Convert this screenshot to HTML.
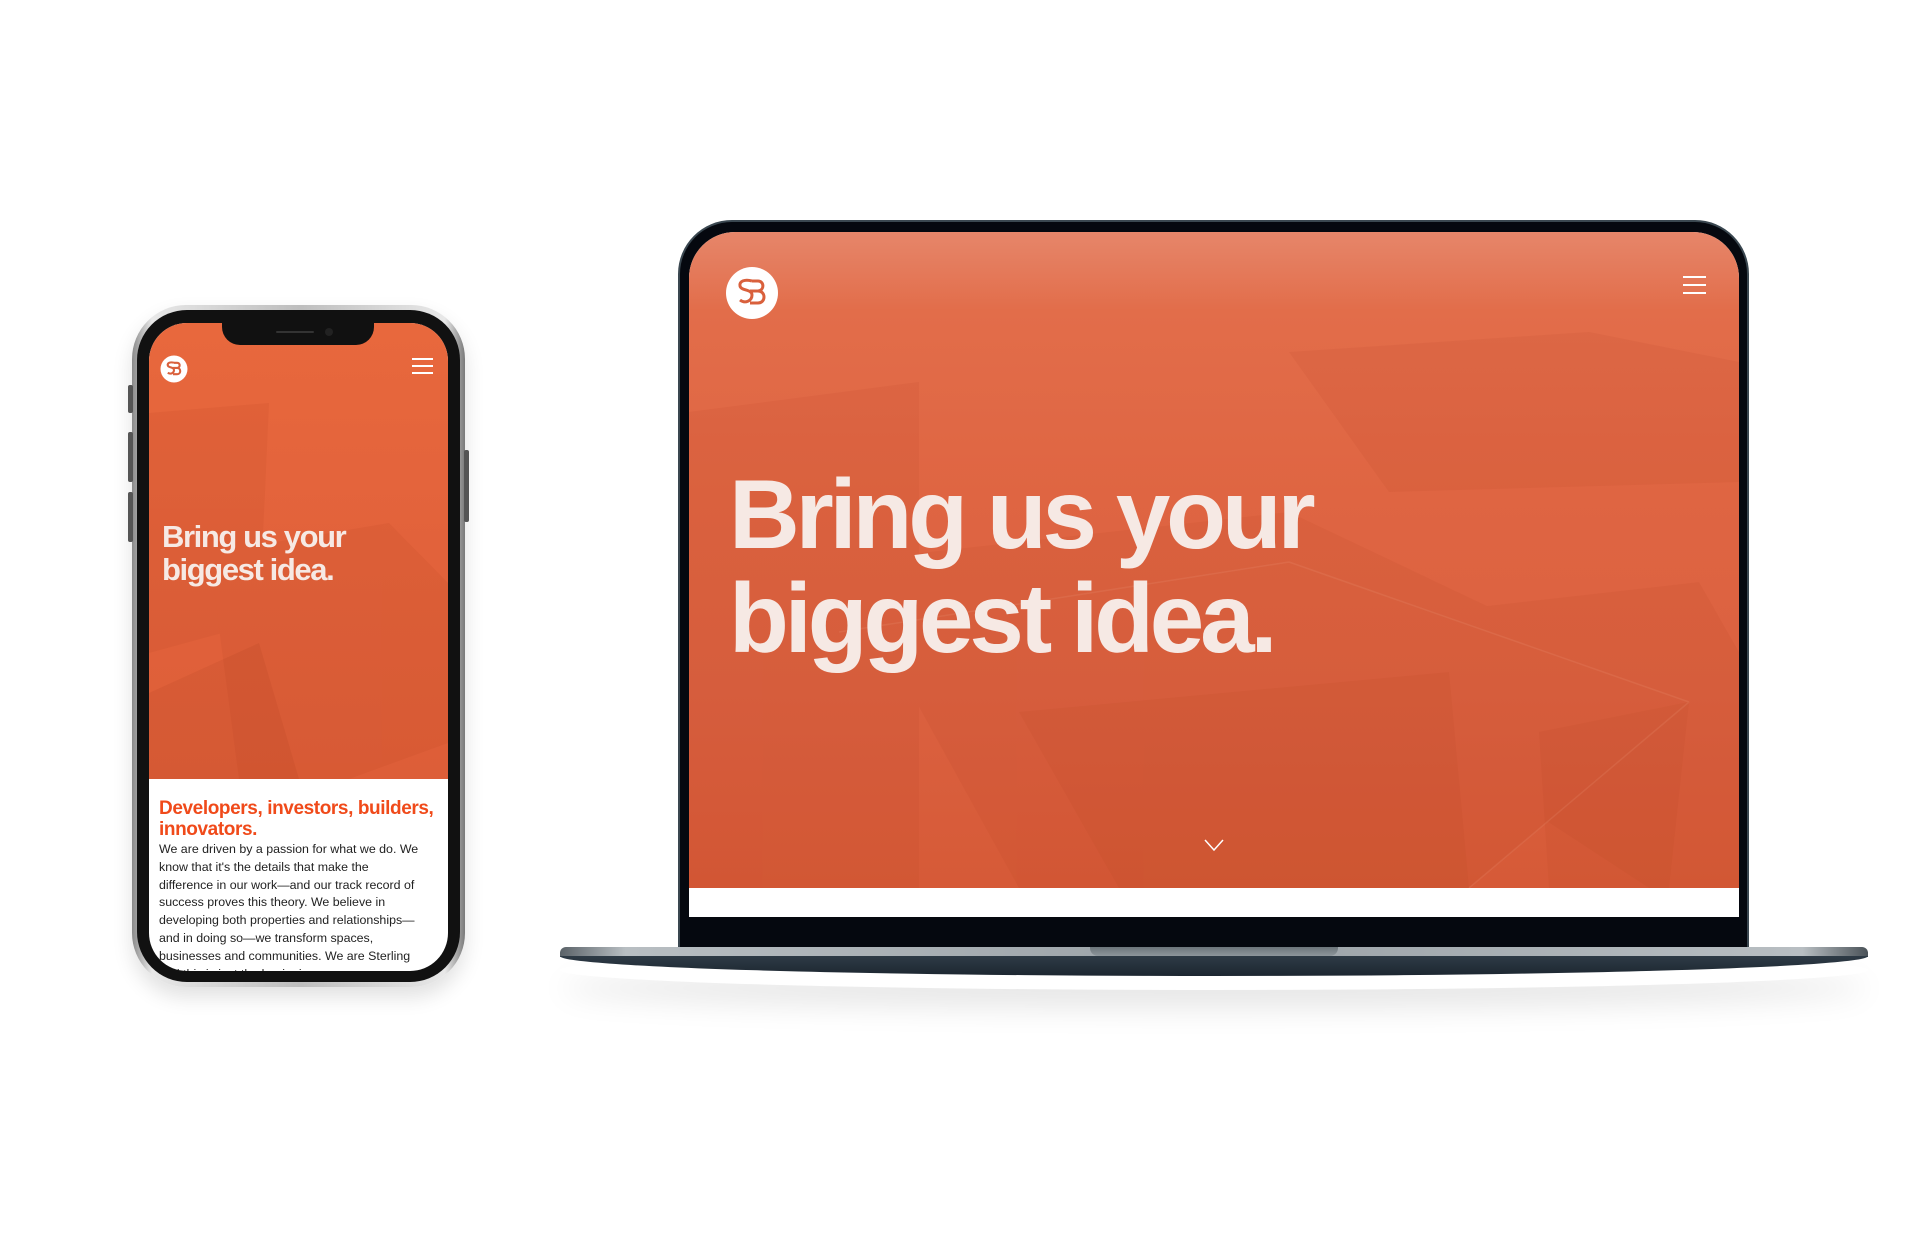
<!DOCTYPE html>
<html><head><meta charset="utf-8"><style>
html,body{margin:0;padding:0;background:#fff;}
body{width:1920px;height:1239px;position:relative;overflow:hidden;font-family:"Liberation Sans",Arial,sans-serif;}
.abs{position:absolute;}
</style></head><body>

<!-- LAPTOP -->
<div class="abs" style="left:560px;top:950px;width:1308px;height:40px;border-radius:50%;box-shadow:0 18px 30px rgba(0,0,0,0.10);"></div>
<div class="abs" style="left:680px;top:222px;width:1067px;height:730px;background:#05080f;border-radius:52px 52px 0 0;box-shadow:0 0 0 2px #3a4750;"></div>
<div class="abs" style="left:689px;top:232px;width:1050px;height:685px;background:#fff;border-radius:46px 46px 0 0;overflow:hidden;">
  <div class="abs" style="left:0;top:0;width:1050px;height:656px;background:linear-gradient(180deg,#e6866a 0%,#e26d4a 12%,#df6542 40%,#db6140 70%,#d65a37 100%);"></div>
  <svg class="abs" style="left:0;top:0" width="1050" height="656">
    <g fill="#a8381a" opacity="0.08">
      <polygon points="0,180 230,150 230,656 0,656"/>
      <polygon points="150,330 600,280 1000,470 780,656 330,656"/>
      <polygon points="570,400 1010,350 1050,420 1050,656 960,656"/>
      <polygon points="600,120 900,100 1050,130 1050,250 700,260"/>
    </g>
    <g fill="#b4421f" opacity="0.1">
      <polygon points="330,480 760,440 780,656 430,656"/>
      <polygon points="850,500 1000,470 980,656 860,656"/>
    </g>
    <g stroke="#f2a88a" stroke-width="1.5" opacity="0.15" fill="none">
      <line x1="150" y1="400" x2="600" y2="330"/><line x1="600" y1="330" x2="1000" y2="470"/>
      <line x1="1000" y1="470" x2="780" y2="656"/>
    </g>
  </svg>
  <svg class="abs" style="left:36px;top:34px" width="54" height="54" viewBox="0 0 54 54">
    <circle cx="27" cy="27" r="26" fill="#fff"/>
    <g fill="none" stroke="#d9603c" stroke-width="3">
      <path d="M27 15 C20 13 14 15 15 20 C16 25 27 23 27 29 C27 35 20 38 15 34"/>
      <path d="M27 15 H33 C39 15 40 24 33 25 H25 M33 25 C41 25 41 37 33 37 H25"/>
    </g>
  </svg>
  <div class="abs" style="left:994px;top:44px;width:23px;height:2px;background:#fff;box-shadow:0 8px 0 #fff,0 16px 0 #fff;"></div>
  <div class="abs" style="left:40px;top:230px;color:#f6e9e4;font-weight:bold;font-size:98px;line-height:104px;letter-spacing:-4.2px;white-space:nowrap;">Bring us your<br>biggest idea.</div>
  <svg class="abs" style="left:515px;top:606px" width="20" height="14"><path d="M1 2 L10 12 L19 2" fill="none" stroke="#fff" stroke-width="1.5"/></svg>
</div>
<div class="abs" style="left:560px;top:947px;width:1308px;height:10px;background:linear-gradient(90deg,#5a6268,#b8bec2 5%,#9aa1a6 50%,#b8bec2 95%,#4a5258);border-radius:6px 6px 0 0;"></div>
<div class="abs" style="left:1090px;top:947px;width:248px;height:9px;background:linear-gradient(180deg,#6c757b,#8e969b);border-radius:0 0 8px 8px;"></div>
<div class="abs" style="left:560px;top:956px;width:1308px;height:20px;background:linear-gradient(180deg,#2e3b46,#1c2630);border-radius:0 0 50% 50% / 0 0 100% 100%;"></div>

<!-- PHONE -->
<div class="abs" style="left:132px;top:305px;width:333px;height:682px;border-radius:54px;background:linear-gradient(90deg,#8a8a8a,#e8e8e8 6%,#bdbdbd 50%,#e8e8e8 94%,#7a7a7a);box-shadow:0 10px 20px rgba(0,0,0,0.12);"></div>
<div class="abs" style="left:128px;top:385px;width:5px;height:28px;background:#555;border-radius:2px;"></div>
<div class="abs" style="left:128px;top:432px;width:5px;height:50px;background:#555;border-radius:2px;"></div>
<div class="abs" style="left:128px;top:492px;width:5px;height:50px;background:#555;border-radius:2px;"></div>
<div class="abs" style="left:464px;top:450px;width:5px;height:72px;background:#555;border-radius:2px;"></div>
<div class="abs" style="left:137px;top:310px;width:323px;height:672px;border-radius:50px;background:#111;"></div>
<div class="abs" style="left:149px;top:323px;width:299px;height:648px;border-radius:38px;background:#fff;overflow:hidden;">
  <div class="abs" style="left:0;top:0;width:299px;height:456px;background:linear-gradient(180deg,#e8683d,#e2623b 50%,#dd5e38);"></div>
  <svg class="abs" style="left:0;top:0" width="299" height="456">
    <g fill="#a8381a" opacity="0.09">
      <polygon points="0,90 120,80 110,300 0,330"/>
      <polygon points="60,230 240,200 299,260 299,420 200,456 90,456"/>
    </g>
    <g fill="#7a2a12" opacity="0.08"><polygon points="0,370 110,320 150,456 0,456"/></g>
  </svg>
  <div class="abs" style="left:73px;top:0;width:152px;height:22px;background:#111;border-radius:0 0 18px 18px;"></div>
  <div class="abs" style="left:127px;top:8px;width:38px;height:2px;background:#333;border-radius:2px;"></div>
  <div class="abs" style="left:176px;top:5px;width:8px;height:8px;background:#222;border-radius:50%;"></div>
  <svg class="abs" style="left:11px;top:32px" width="28" height="28" viewBox="0 0 54 54">
    <circle cx="27" cy="27" r="26" fill="#fff"/>
    <g fill="none" stroke="#d9603c" stroke-width="4">
      <path d="M27 15 C20 13 14 15 15 20 C16 25 27 23 27 29 C27 35 20 38 15 34"/>
      <path d="M27 15 H33 C39 15 40 24 33 25 H25 M33 25 C41 25 41 37 33 37 H25"/>
    </g>
  </svg>
  <div class="abs" style="left:263px;top:35px;width:21px;height:2px;background:#fff;box-shadow:0 7px 0 #fff,0 14px 0 #fff;"></div>
  <div class="abs" style="left:13px;top:197px;color:#f6e9e4;font-weight:bold;font-size:31px;line-height:33px;letter-spacing:-1.4px;white-space:nowrap;">Bring us your<br>biggest idea.</div>
  <div class="abs" style="left:10px;top:475px;color:#f04a1a;font-weight:bold;font-size:19px;line-height:21px;letter-spacing:-0.4px;white-space:nowrap;">Developers, investors, builders,<br>innovators.</div>
  <div class="abs" style="left:10px;top:518px;color:#222;font-size:12.4px;line-height:17.8px;white-space:nowrap;">We are driven by a passion for what we do. We<br>know that it's the details that make the<br>difference in our work—and our track record of<br>success proves this theory. We believe in<br>developing both properties and relationships—<br>and in doing so—we transform spaces,<br>businesses and communities. We are Sterling<br>and this is just the beginning.</div>
</div>

</body></html>
